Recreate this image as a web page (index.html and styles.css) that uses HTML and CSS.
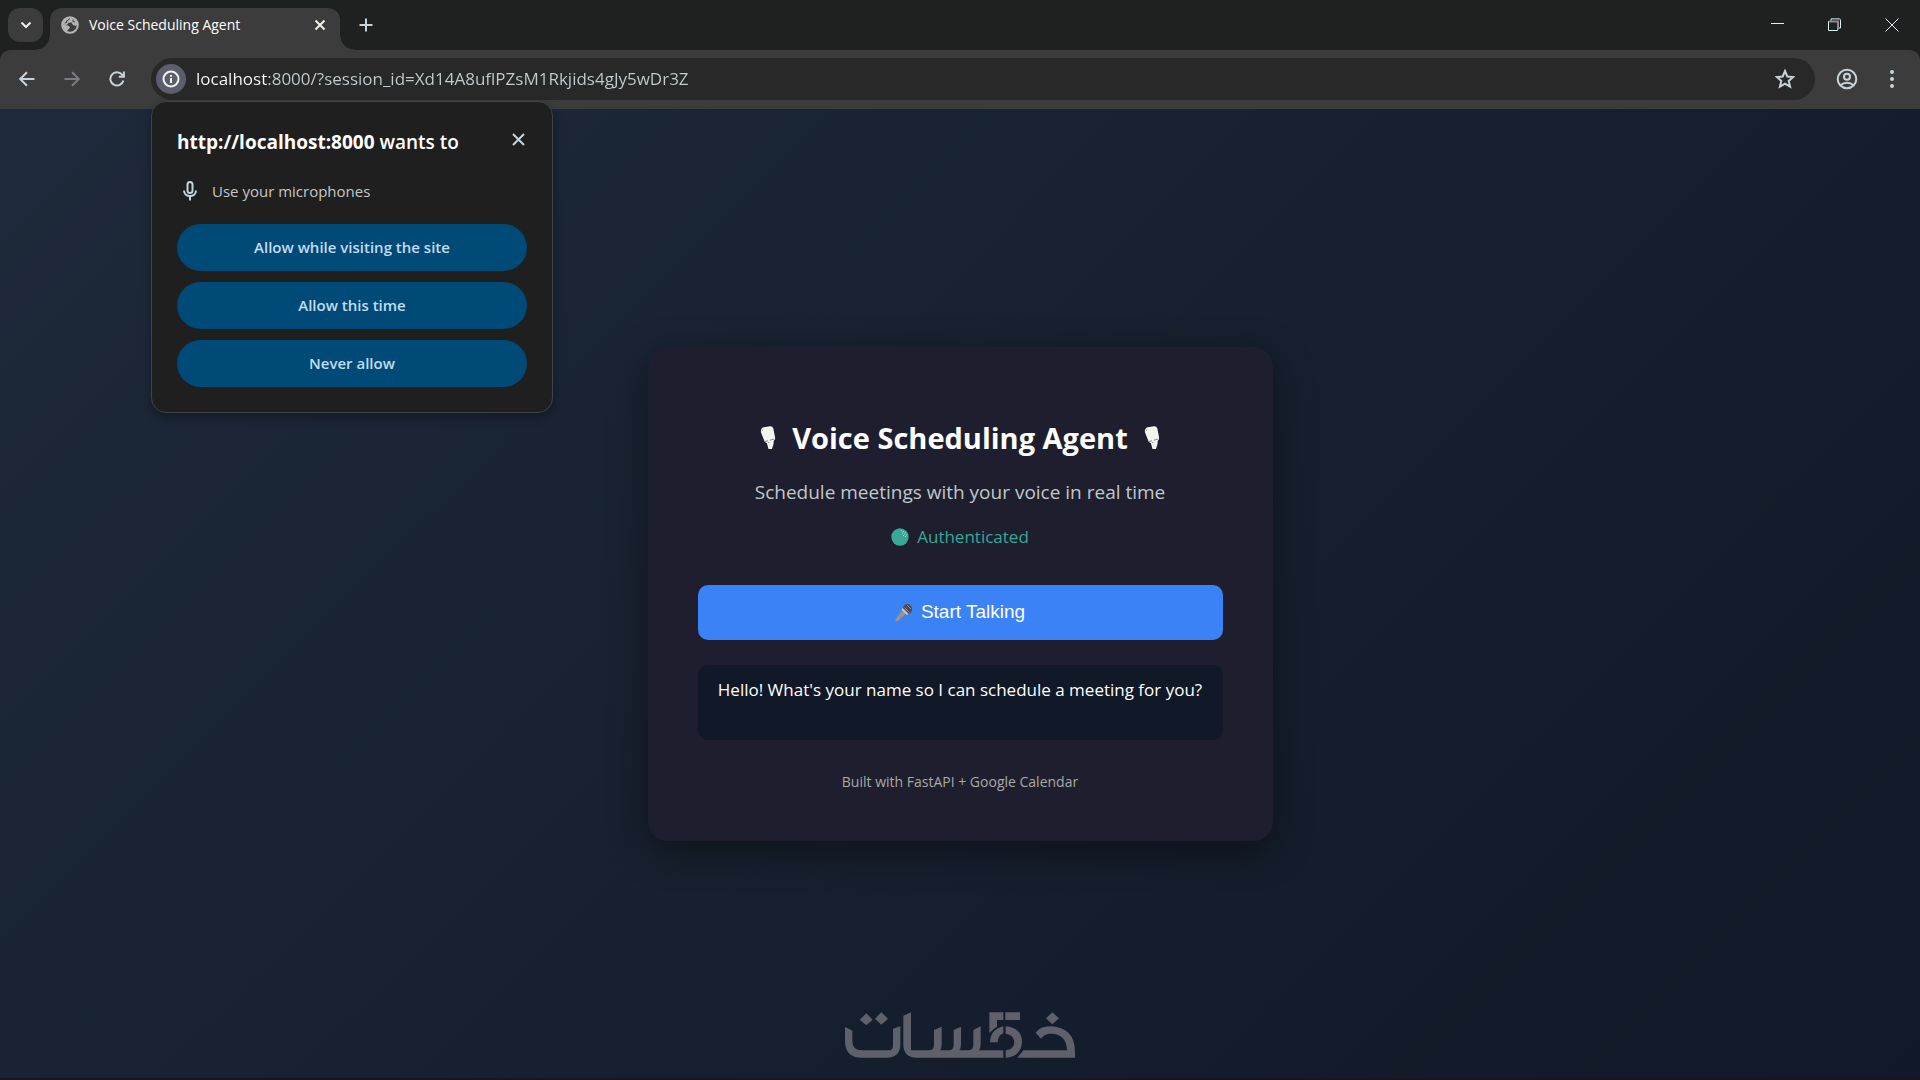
FILE: index.html
```html
<!DOCTYPE html>
<html lang="en">
<head>
<meta charset="utf-8">
<meta name="viewport" content="width=device-width, initial-scale=1">
<title>Voice Scheduling Agent</title>
<link rel="stylesheet" href="styles.css">
</head>
<body>
<div class="browser">
  <header class="chrome">
    <div class="tab-strip">
      <button class="tab-search" type="button" aria-label="Search tabs">
        <svg width="12" height="8" viewBox="0 0 12 8"><path class="stroke stroke-bold" d="M1.500 1.500 6 6l4.500-4.500"/></svg>
      </button>
      <div class="tab">
        <svg class="favicon" width="18" height="18" viewBox="0 0 18 18">
          <circle class="globe-ring" cx="9" cy="9" r="7.800"/>
          <path class="globe-land" d="M8 1.500 14 3l2.500 5-1.500 2-3-1-1.500-2.500-3 .3-1.500 2-3.500.2-.8-2.500L4 3z"/>
          <path class="globe-land" d="M1.500 8.500 7 9.500l2 1.500-1 2-1.500 1-.2 2.500L3 14z"/>
          <path class="globe-gap" d="M8.500 2.500 7.500 4l-2 1 .2 1.500-2 .5M12 3.500v2l2 .5"/>
        </svg>
        <span class="tab-title">Voice Scheduling Agent</span>
        <button class="icon-button tab-close" type="button" aria-label="Close tab">
          <svg width="12" height="12" viewBox="0 0 12 12"><path class="stroke stroke-bold" d="m1.500 1.500 9 9m0-9-9 9"/></svg>
        </button>
      </div>
      <button class="icon-button new-tab" type="button" aria-label="New tab">
        <svg width="14" height="14" viewBox="0 0 14 14"><path class="stroke" d="M7 .5v13M.5 7h13"/></svg>
      </button>
      <div class="window-controls">
        <button class="window-button" type="button" aria-label="Minimize">
          <svg width="14" height="14" viewBox="0 0 14 14"><path class="stroke-thin" d="M0 5.500h13"/></svg>
        </button>
        <button class="window-button" type="button" aria-label="Restore">
          <svg width="14" height="14" viewBox="0 0 14 14"><path class="stroke-thin" d="M.5 3.500h9v9h-9zM3 3V.9h8.200q1.300 0 1.300 1.300V10H10"/><path class="restore-shade" d="M1 3.500h9v8"/></svg>
        </button>
        <button class="window-button" type="button" aria-label="Close">
          <svg width="14" height="14" viewBox="0 0 14 14"><path class="stroke-thin" d="m.5.5 13 13m0-13-13 13"/></svg>
        </button>
      </div>
    </div>
    <div class="toolbar">
      <nav class="nav-buttons" aria-label="History">
        <button class="icon-button" type="button" aria-label="Back">
          <svg width="16" height="16" viewBox="0 0 16 16"><path class="stroke" d="M15.500 8H1.500M8 1.200 1.200 8 8 14.800"/></svg>
        </button>
        <button class="icon-button" type="button" aria-label="Forward">
          <svg class="dim" width="16" height="16" viewBox="0 0 16 16"><path class="stroke" d="M.5 8h14M8 1.200 14.800 8 8 14.800"/></svg>
        </button>
        <button class="icon-button" type="button" aria-label="Reload">
          <svg width="16" height="16" viewBox="0 0 16 16"><path class="stroke" d="M14.400 9.500A6.600 6.600 0 1 1 13 3.600l1.500 1.900M14.900.5v5.200H9.800"/></svg>
        </button>
      </nav>
      <div class="omnibox">
        <button class="site-info" type="button" aria-label="View site information">
          <svg width="18" height="18" viewBox="0 0 18 18"><circle class="stroke" cx="9" cy="9" r="7.500"/><path class="stroke" d="M9 8v5M9 5v1.800"/></svg>
        </button>
        <input class="url" type="text" aria-label="Address" value="localhost:8000/?session_id=Xd14A8uflPZsM1Rkjids4gJy5wDr3Z">
        <button class="icon-button" type="button" aria-label="Bookmark this tab">
          <svg width="20" height="20" viewBox="0 0 20 20"><path class="stroke" d="m10 2 2.300 5.500 5.900.5-4.500 3.900 1.400 5.800-5.100-3.100-5.100 3.100 1.400-5.800L1.800 8l5.900-.5z"/></svg>
        </button>
        <section class="prompt" role="dialog" aria-labelledby="prompt-title">
          <div class="prompt-head">
            <h2 class="prompt-title" id="prompt-title"><b>http://localhost:8000</b> wants to</h2>
            <button class="icon-button prompt-close" type="button" aria-label="Close">
              <svg width="13" height="13" viewBox="0 0 13 13"><path class="stroke" d="m1 1 11 11m0-11L1 12"/></svg>
            </button>
          </div>
          <p class="prompt-request">
            <svg width="14" height="20" viewBox="0 0 14 20"><rect class="stroke" x="4.500" y="1" width="5" height="11" rx="2.500"/><path class="stroke" d="M1 9.500c0 7.300 12 7.300 12 0M7 15v4.500"/></svg>
            Use your microphones
          </p>
          <div class="prompt-actions">
            <button class="prompt-button" type="button">Allow while visiting the site</button>
            <button class="prompt-button" type="button">Allow this time</button>
            <button class="prompt-button" type="button">Never allow</button>
          </div>
        </section>
      </div>
      <div class="toolbar-end">
        <button class="icon-button" type="button" aria-label="Profile">
          <svg width="22" height="22" viewBox="0 0 22 22"><circle class="stroke" cx="11" cy="11" r="9.300"/><circle class="stroke" cx="11" cy="8.700" r="3"/><path class="stroke" d="M4.500 17.300c3.500-3.300 9.500-3.300 13 0"/></svg>
        </button>
        <button class="icon-button" type="button" aria-label="Menu">
          <svg width="6" height="20" viewBox="0 0 6 20"><circle class="fill" cx="3" cy="3" r="2"/><circle class="fill" cx="3" cy="10" r="2"/><circle class="fill" cx="3" cy="17" r="2"/></svg>
        </button>
      </div>
    </div>
  </header>

  <main class="page">
    <article class="card">
      <h1 class="card-title">
        <svg width="16" height="24" viewBox="0 0 16 24"><path class="mic-white" d="M2.500 1.500 10 .3q2.500-.2 3.300 2l1.800 9.200q.4 2-1.300 3.200L13.500 18l-1.500 5H8.500L7 17.500 4.700 15.800 1 6.500Q.5 3 2.500 1.500z"/><path class="mic-crease" d="M5 15.500l3-.8M10 14.200l4-1.200M8 16l1 1M2 4l1 .5"/></svg>
        <span>Voice Scheduling Agent</span>
        <svg width="16" height="24" viewBox="0 0 16 24"><path class="mic-white" d="M2.500 1.500 10 .3q2.500-.2 3.300 2l1.800 9.200q.4 2-1.300 3.200L13.500 18l-1.500 5H8.500L7 17.500 4.700 15.800 1 6.500Q.5 3 2.500 1.500z"/><path class="mic-crease" d="M5 15.500l3-.8M10 14.200l4-1.200M8 16l1 1M2 4l1 .5"/></svg>
      </h1>
      <p class="card-subtitle">Schedule meetings with your voice in real time</p>
      <p class="card-status">
        <svg width="18" height="18" viewBox="0 0 18 18"><circle class="status-dot" cx="9" cy="9" r="8.700"/><path class="status-shine" d="M10 2.500h1M12 3.500h1M14 4.500h1M11 5h1M13 6h1M15 7h1M12 7.500h1M14 8.500h1"/></svg>
        Authenticated
      </p>
      <button class="talk-button" type="button">
        <svg width="18" height="19" viewBox="0 0 18 19"><path class="mic-handle" d="M8 6.500 11.500 10 3 18l-2.500.5V16z"/><path class="mic-band" d="m7.500 5 6 6-1.800 1L6.500 6.800z"/><path class="mic-head" d="M8 4.500C9 1 13 0 15.500 2.500S17.500 9 14 11z"/><path class="mic-glint" d="m9.500 4.500 5 5M12 2l4 4"/></svg>
        Start Talking
      </button>
      <div class="transcript">Hello! What's your name so I can schedule a meeting for you?</div>
      <footer class="card-footer">Built with FastAPI + Google Calendar</footer>
    </article>
    <svg class="watermark" width="230" height="46" viewBox="75 65 690 136" role="img" aria-label="خمسات">
      <path d="M75 108 97 120V152Q97 179 125 179H205Q219 179 219 165V114L241 107V160Q241 201 200 201H125Q75 201 75 150zM139 68l19 19-19 17-20-17zM184 65l20 19-20 18-19-18z"/>
      <path d="M250 75 273 65V179H326Q342 179 342 163V118L365 108V160Q365 173 360 179H386Q401 179 401 163V118L423 108V160Q423 173 418 179H444Q460 179 460 163V118L482 107V160Q482 173 477 179H550V201H290Q250 201 250 160z"/>
      <path d="M508 65H550V88H531V108Q520 114 508 127zM556 65H600V88H556zM550 107V128Q534 134 533 155H510Q511 116 550 107zM557 107Q606 112 606 154 604 197 557 201V179Q583 176 583 154 581 132 557 129z"/>
      <path d="M697 65l20 18-20 18-19-18zM647 126Q662 107 690 107 765 109 765 185V201H592L610 179H741Q739 130 694 129 675 128 663 144z"/>
    </svg>
  </main>
</div>
</body>
</html>
```
FILE: styles.css
```css
:root {
  --ui-font: "Open Sans", "Noto Sans", sans-serif;
  --icon: #c7d3da;
  --toolbar: #3c3c3c;
}

* {
  box-sizing: border-box;
}

body {
  margin: 0;
  font-family: var(--ui-font);
  color: #fff;
}

h1,
h2,
p {
  margin: 0;
}

button,
input {
  margin: 0;
  padding: 0;
  border: 0;
  background: none;
  color: inherit;
  font: inherit;
}

svg {
  display: block;
  flex: none;
  color: var(--icon);
}

.stroke,
.stroke-thin {
  fill: none;
  stroke: currentColor;
  stroke-width: 2;
}

.stroke-bold {
  stroke: #eef0e8;
}

.stroke-thin {
  stroke: #dff0f4;
  stroke-width: 1;
}

.fill {
  fill: currentColor;
}

.dim {
  color: #7d7b82;
}

.browser {
  display: flex;
  flex-direction: column;
  min-height: 100vh;
}

.icon-button {
  display: flex;
  align-items: center;
  justify-content: center;
  flex: none;
  width: 32px;
  height: 32px;
}

/* Tab strip */

.chrome {
  background: #1f2120;
}

.tab-strip {
  display: flex;
  align-items: center;
  height: 50px;
  padding-left: 8px;
}

.tab-search {
  display: flex;
  align-items: center;
  justify-content: center;
  width: 35px;
  height: 34px;
  border-radius: 12px;
  background: var(--toolbar);
}

.tab {
  position: relative;
  display: flex;
  align-items: center;
  gap: 10px;
  align-self: flex-end;
  width: 290px;
  height: 42px;
  margin-left: 7px;
  padding: 0 4px 8px 11px;
  border-radius: 12px 12px 0 0;
  background: var(--toolbar);
}

.tab::before,
.tab::after {
  content: "";
  position: absolute;
  bottom: 0;
  width: 14px;
  height: 14px;
}

.tab::before {
  right: 100%;
  background: radial-gradient(circle at 0 0, transparent 13px, var(--toolbar) 14px);
}

.tab::after {
  left: 100%;
  background: radial-gradient(circle at 100% 0, transparent 13px, var(--toolbar) 14px);
}

.tab-title {
  flex: 1;
  font-size: 14px;
  line-height: 20px;
}

.globe-ring {
  fill: none;
  stroke: #b5b5b5;
  stroke-width: 2;
}

.globe-land {
  fill: #b5b5b5;
}

.globe-gap {
  fill: none;
  stroke: var(--toolbar);
  stroke-width: 1;
}

.new-tab {
  margin-left: 10px;
}

.window-controls {
  display: flex;
  margin-left: auto;
}

.window-button {
  display: flex;
  align-items: center;
  justify-content: center;
  width: 57px;
  height: 50px;
}

.restore-shade {
  fill: none;
  stroke: #8a8a90;
  stroke-width: 2;
}

/* Toolbar */

.toolbar {
  display: flex;
  align-items: center;
  height: 59px;
  padding: 0 12px 2px 11px;
  border-radius: 10px 10px 0 0;
  background: var(--toolbar);
}

.nav-buttons {
  display: flex;
  gap: 13px;
}

.omnibox {
  position: relative;
  display: flex;
  align-items: center;
  flex: 1;
  height: 42px;
  margin-left: 18px;
  padding: 0 14px 0 5px;
  border-radius: 21px;
  background: #282828;
}

.site-info {
  display: flex;
  align-items: center;
  justify-content: center;
  width: 30px;
  height: 30px;
  border-radius: 50%;
  background: #5c5f6b;
}

.site-info svg {
  color: #eef2f2;
}

.url {
  flex: 1;
  min-width: 0;
  margin-left: 10px;
  background: linear-gradient(90deg, #fff 72px, #c5cdd0 72px);
  background-clip: text;
  color: transparent;
  font-size: 17px;
  line-height: 24px;
}

.toolbar-end {
  display: flex;
  gap: 13px;
  margin-left: 16px;
}

/* Permission prompt */

.prompt {
  position: absolute;
  top: 43px;
  left: 0;
  z-index: 1;
  width: 402px;
  padding: 24px 25px 25px;
  border: 1px solid #414345;
  border-radius: 15px;
  background: #1f1f1f;
  box-shadow: 0 4px 10px rgba(0, 0, 0, 0.3);
}

.prompt-head {
  display: flex;
  justify-content: space-between;
}

.prompt-title {
  font-size: 19px;
  font-weight: 600;
  line-height: 32px;
}

.prompt-title b {
  font-weight: 700;
}

.prompt-close {
  width: 18px;
  height: 28px;
}

.prompt-request {
  display: flex;
  align-items: center;
  gap: 15px;
  margin: 20px 0;
  padding-left: 6px;
  color: #c7c7c7;
  font-size: 15px;
  line-height: 26px;
}

.prompt-actions {
  display: grid;
  gap: 11px;
}

.prompt-button {
  height: 47px;
  border-radius: 24px;
  background: #004a77;
  color: #c2dcf0;
  font-size: 15px;
  font-weight: 600;
}

/* Page */

.page {
  display: grid;
  grid-template-rows: 1fr auto 1fr;
  justify-items: center;
  flex: 1;
  border-bottom: 2px solid #1a141d;
  background: linear-gradient(135deg, #1e293b, #182230 40%, #111827);
}

.card {
  grid-row: 2;
  display: flex;
  flex-direction: column;
  width: 625px;
  max-width: 100%;
  padding: 70px 50px 47px;
  border-radius: 20px;
  background: #1e1e2e;
  box-shadow: 0 10px 38px rgba(0, 0, 0, 0.4);
  text-align: center;
}

.card-title {
  display: flex;
  align-items: center;
  justify-content: center;
  gap: 16px;
  font-size: 29px;
  font-weight: 700;
  line-height: 42px;
}

.mic-white {
  fill: #f4f4ee;
}

.mic-crease {
  fill: none;
  stroke: #8d8d92;
  stroke-width: 1;
}

.card-subtitle {
  margin-top: 18px;
  color: #c0c8cc;
  font-size: 19px;
  line-height: 30px;
}

.card-status {
  display: flex;
  align-items: center;
  justify-content: center;
  gap: 8px;
  margin: 16px 0 34px;
  color: #35a898;
  font-size: 17px;
  line-height: 28px;
}

.status-dot {
  fill: #3aa898;
}

.status-shine {
  fill: none;
  stroke: #a9d8d0;
  stroke-width: 1;
}

.talk-button {
  display: flex;
  align-items: center;
  justify-content: center;
  gap: 8px;
  height: 55px;
  border-radius: 10px;
  background: #3b82f6;
  font-family: "Liberation Sans", Arial, sans-serif;
  font-size: 19px;
}

.mic-handle {
  fill: #9a9390;
}

.mic-band {
  fill: #c9c5bd;
}

.mic-head {
  fill: #4a4a50;
}

.mic-glint {
  fill: none;
  stroke: #8f8f94;
  stroke-width: 1;
}

.transcript {
  min-height: 75px;
  margin-top: 25px;
  padding: 12px 16px;
  border-radius: 10px;
  background: #111827;
  font-size: 17px;
  line-height: 26px;
}

.card-footer {
  margin-top: 30px;
  color: #a9a9a6;
  font-size: 14px;
  line-height: 24px;
}

.watermark {
  grid-row: 3;
  align-self: end;
  margin-bottom: 20px;
  fill: #5e606c;
}
```
